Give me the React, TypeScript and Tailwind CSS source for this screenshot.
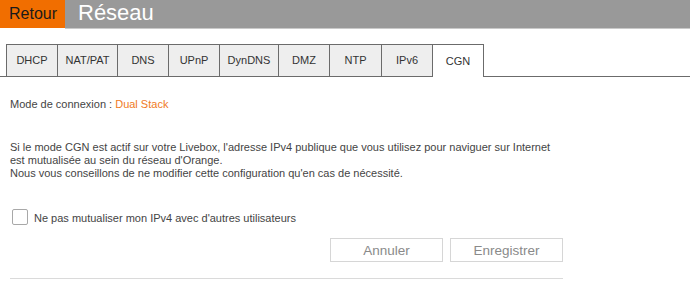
import { FC } from 'react';

const tabs = [
  { label: 'DHCP', w: 'w-[52px] border-l' },
  { label: 'NAT/PAT', w: 'w-[60px]' },
  { label: 'DNS', w: 'w-[51px]' },
  { label: 'UPnP', w: 'w-[51px]' },
  { label: 'DynDNS', w: 'w-[59px]' },
  { label: 'DMZ', w: 'w-[51px]' },
  { label: 'NTP', w: 'w-[52px]' },
  { label: 'IPv6', w: 'w-[51px]' },
  { label: 'CGN', w: 'w-[51px]', active: true },
];

const App: FC = () => {
  return (
    <div className="w-[690px] h-[308px] bg-white overflow-hidden font-['Liberation_Sans',Arial,sans-serif]">
      {/* Header */}
      <div className="flex h-[29px]">
        <div className="w-[65px] h-[28px] bg-[#f16e00] flex items-center pl-[9px] text-[16px] text-[#1a1a1a]">
          Retour
        </div>
        <div className="flex-1 h-[29px] bg-[#999999] border-b border-[#c9c9c9] flex items-center pl-[13px] pb-[3px] text-[22px] text-white">
          Réseau
        </div>
      </div>

      {/* Tabs */}
      <div className="flex items-end h-[33px] mt-[15px]">
        <div className="w-[6px] h-full border-b border-[#6b6b6b]" />
        {tabs.map((tab) => (
          <div
            key={tab.label}
            className={`${tab.w} h-full flex items-center justify-center border-t border-r border-[#6b6b6b] text-[11px] text-[#333] ${
              tab.active ? 'bg-white' : 'bg-[#eeeeee] border-b'
            }`}
          >
            {tab.label}
          </div>
        ))}
        <div className="flex-1 h-full border-b border-[#6b6b6b]" />
      </div>

      {/* Content */}
      <div className="pl-[10px] w-[563px] text-[11px] leading-[13px] text-[#444]">
        <p className="mt-[21px]">
          Mode de connexion : <span className="text-[#f07a25]">Dual Stack</span>
        </p>

        <p className="mt-[30px]">
          Si le mode CGN est actif sur votre Livebox, l'adresse IPv4 publique que vous utilisez pour naviguer sur Internet
          est mutualisée au sein du réseau d'Orange.
          <br />
          Nous vous conseillons de ne modifier cette configuration qu'en cas de nécessité.
        </p>

        <label className="flex items-center mt-[29px] pl-[2px]">
          <span className="w-[16px] h-[16px] border border-[#a8a8a8] rounded-[2px] bg-white" />
          <span className="ml-[6px] mt-[3px]">Ne pas mutualiser mon IPv4 avec d'autres utilisateurs</span>
        </label>

        <div className="flex justify-end gap-[7px] mt-[13px]">
          <button className="w-[113px] h-[24px] border border-[#d6d6d6] bg-white text-[13.5px] text-[#8a8a8a]">
            Annuler
          </button>
          <button className="w-[113px] h-[24px] border border-[#d6d6d6] bg-white text-[13.5px] text-[#8a8a8a]">
            Enregistrer
          </button>
        </div>

        <div className="mt-[16px] h-px bg-[#dadada]" />
      </div>
    </div>
  );
};

export default App;
